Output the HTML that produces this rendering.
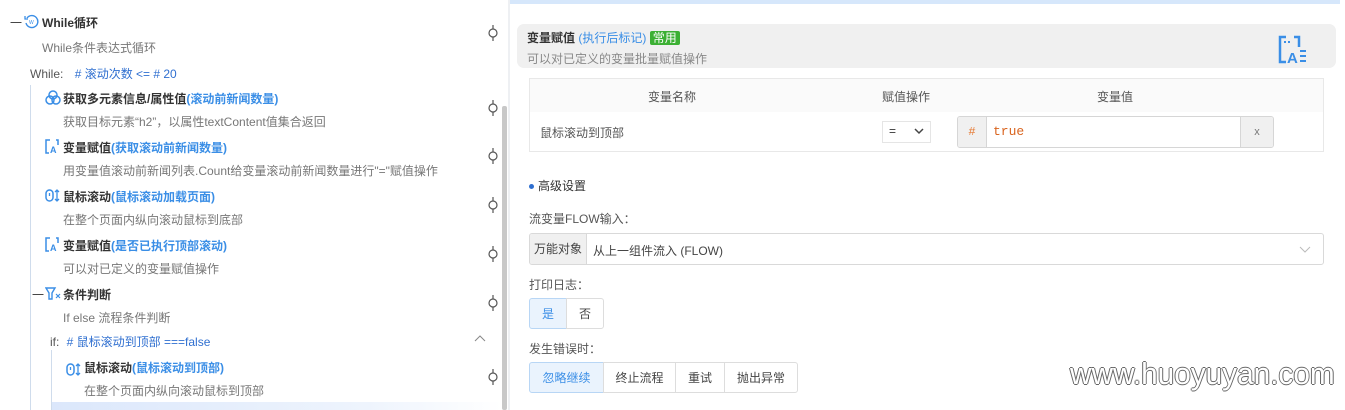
<!DOCTYPE html>
<html><head><meta charset="utf-8"><style>
*{box-sizing:border-box;margin:0;padding:0}
body{width:1345px;height:410px;overflow:hidden;background:#fff;font-family:"Liberation Sans","Noto Sans CJK SC",sans-serif;font-size:12px;color:#333;position:relative}
.a{position:absolute;white-space:nowrap}
.t{font-weight:bold;color:#333;font-size:12px}
.b{color:#3a8ee6}
.d{color:#777;font-size:12px}
.lbl{color:#555}
.btn{position:absolute;top:0;height:31px;border:1px solid #ddd;display:flex;align-items:center;justify-content:center;color:#444;background:#fff}
.on{background:#eaf3fd;color:#3a8ee6;border-color:#b8d6f5}
</style></head><body>
<div class="a" style="left:10px;top:14px;color:#444">一</div>
<svg class="a" style="left:24px;top:14px" width="15" height="15" viewBox="0 0 15 15"><path d="M3 4a6 6 0 1 1-1 5" fill="none" stroke="#3a8ee6" stroke-width="1.4"/><path d="M1 2v3h3" fill="none" stroke="#3a8ee6" stroke-width="1.3"/><text x="5" y="10" font-size="5" fill="#3a8ee6">W</text></svg>
<div class="a t" style="left:42px;top:14px">While循环</div>
<div class="a d" style="left:42px;top:39px">While条件表达式循环</div>
<div class="a" style="left:30px;top:65px;color:#555">While: <span style="color:#2f6fd0;margin-left:8px"># 滚动次数 &lt;= # 20</span></div>
<div class="a" style="left:30px;top:85px;width:1px;height:325px;background:#cfdcec"></div>

<svg class="a" style="left:45px;top:90px" width="16" height="15" viewBox="0 0 16 15"><circle cx="8" cy="5" r="4" fill="none" stroke="#3a8ee6" stroke-width="1.5"/><circle cx="5" cy="10" r="4" fill="none" stroke="#3a8ee6" stroke-width="1.5"/><circle cx="11" cy="10" r="4" fill="none" stroke="#3a8ee6" stroke-width="1.5"/></svg>
<div class="a t" style="left:63px;top:90px">获取多元素信息/属性值<span class="b">(滚动前新闻数量)</span></div>
<div class="a d" style="left:63px;top:113px">获取目标元素“h2”，以属性textContent值集合返回</div>

<svg class="a" style="left:45px;top:139px" width="16" height="15" viewBox="0 0 16 15"><path d="M5 1H1v13h3M11 1h2v5" fill="none" stroke="#3a8ee6" stroke-width="1.5"/><text x="5" y="14" font-size="9" fill="#3a8ee6" font-weight="bold">A</text></svg>
<div class="a t" style="left:63px;top:139px">变量赋值<span class="b">(获取滚动前新闻数量)</span></div>
<div class="a d" style="left:63px;top:162px">用变量值滚动前新闻列表.Count给变量滚动前新闻数量进行"="赋值操作</div>

<svg class="a" style="left:45px;top:188px" width="16" height="15" viewBox="0 0 16 15"><rect x="1" y="2" width="7" height="11" rx="3.5" fill="none" stroke="#3a8ee6" stroke-width="1.5"/><path d="M4.5 5v3M12 2v11M10 4l2-2 2 2M10 11l2 2 2-2" fill="none" stroke="#3a8ee6" stroke-width="1.3"/></svg>
<div class="a t" style="left:63px;top:188px">鼠标滚动<span class="b">(鼠标滚动加载页面)</span></div>
<div class="a d" style="left:63px;top:211px">在整个页面内纵向滚动鼠标到底部</div>

<svg class="a" style="left:45px;top:237px" width="16" height="15" viewBox="0 0 16 15"><path d="M5 1H1v13h3M11 1h2v5" fill="none" stroke="#3a8ee6" stroke-width="1.5"/><text x="5" y="14" font-size="9" fill="#3a8ee6" font-weight="bold">A</text></svg>
<div class="a t" style="left:63px;top:237px">变量赋值<span class="b">(是否已执行顶部滚动)</span></div>
<div class="a d" style="left:63px;top:260px">可以对已定义的变量赋值操作</div>

<div class="a" style="left:32px;top:286px;color:#444">一</div>
<svg class="a" style="left:45px;top:286px" width="16" height="15" viewBox="0 0 16 15"><path d="M1 2h9L7 7v6H4V7z" fill="none" stroke="#3a8ee6" stroke-width="1.4"/><path d="M11 8l4 4M15 8l-4 4" stroke="#3a8ee6" stroke-width="1.2"/></svg>
<div class="a t" style="left:63px;top:286px">条件判断</div>
<div class="a d" style="left:63px;top:309px">If else 流程条件判断</div>
<div class="a" style="left:50px;top:333px;color:#555">if: <span style="color:#2f6fd0;margin-left:4px"># 鼠标滚动到顶部 ===false</span></div>
<svg class="a" style="left:474px;top:334px" width="12" height="8"><path d="M1 7l5-5 5 5" fill="none" stroke="#888" stroke-width="1"/></svg>
<div class="a" style="left:51px;top:350px;width:1px;height:60px;background:#cfdcec"></div>
<svg class="a" style="left:66px;top:362px" width="16" height="15" viewBox="0 0 16 15"><rect x="1" y="2" width="7" height="11" rx="3.5" fill="none" stroke="#3a8ee6" stroke-width="1.5"/><path d="M4.5 5v3M12 2v11M10 4l2-2 2 2M10 11l2 2 2-2" fill="none" stroke="#3a8ee6" stroke-width="1.3"/></svg>
<div class="a t" style="left:84px;top:359px">鼠标滚动<span class="b">(鼠标滚动到顶部)</span></div>
<div class="a d" style="left:84px;top:382px">在整个页面内纵向滚动鼠标到顶部</div>
<div class="a" style="left:52px;top:402px;width:450px;height:8px;background:linear-gradient(90deg,#dbe7fb,#eef4fd 70%,#fff)"></div>

<svg style="position:absolute;left:0;top:0" width="510" height="410">
<g fill="#fff" stroke="#555" stroke-width="1.2">
<path d="M493 25v4M493 37v4"/><circle cx="493" cy="33" r="4"/>
<path d="M493 100v4M493 112v4"/><circle cx="493" cy="108" r="4"/>
<path d="M493 148v4M493 160v4"/><circle cx="493" cy="156" r="4"/>
<path d="M493 197v4M493 209v4"/><circle cx="493" cy="205" r="4"/>
<path d="M493 246v4M493 258v4"/><circle cx="493" cy="254" r="4"/>
<path d="M493 295v4M493 307v4"/><circle cx="493" cy="303" r="4"/>
<path d="M493 369v4M493 381v4"/><circle cx="493" cy="377" r="4"/>
</g>
<rect x="502" y="106" width="5" height="304" rx="2" fill="#c8c8c8"/>
<rect x="508" y="0" width="2" height="410" fill="#eef0f3"/>
</svg>

<div class="a" style="left:510px;top:0;width:830px;height:4px;background:#d6e7fb"></div>
<div class="a" style="left:517px;top:24px;width:819px;height:44px;background:#f0f0f0;border-radius:7px"></div>
<div class="a" style="left:527px;top:29px;font-weight:bold">变量赋值 <span class="b" style="font-weight:normal">(执行后标记)</span> <span style="background:#3cb034;color:#fff;padding:0 3px;border-radius:2px;font-weight:normal">常用</span></div>
<div class="a d" style="left:527px;top:50px;color:#888">可以对已定义的变量批量赋值操作</div>
<svg class="a" style="left:1277px;top:35px" width="32" height="30" viewBox="0 0 32 30"><path d="M9 2H3v25h6M17 2h5v10" fill="none" stroke="#3a8ee6" stroke-width="2.5"/><rect x="7" y="6" width="2" height="2" fill="#3a8ee6"/><rect x="11" y="6" width="2" height="2" fill="#3a8ee6"/><text x="10" y="28" font-size="15" fill="#3a8ee6" font-weight="bold">A</text><path d="M23 16h6M23 21h6M23 26h6" stroke="#3a8ee6" stroke-width="2"/></svg>

<div class="a" style="left:529px;top:78px;width:795px;height:74px;border:1px solid #e8e8e8"></div>
<div class="a" style="left:530px;top:79px;width:793px;height:33px;background:#fafafa"></div>
<div class="a lbl" style="left:648px;top:88px">变量名称</div>
<div class="a lbl" style="left:882px;top:88px">赋值操作</div>
<div class="a lbl" style="left:1097px;top:88px">变量值</div>
<div class="a lbl" style="left:540px;top:124px">鼠标滚动到顶部</div>
<div class="a" style="left:882px;top:121px;width:49px;height:22px;border:1px solid #e5e5e5"></div>
<div class="a" style="left:889px;top:124px;color:#333">=</div>
<svg class="a" style="left:914px;top:128px" width="10" height="7"><path d="M1 1l4 4 4-4" fill="none" stroke="#444" stroke-width="1.5"/></svg>
<div class="a" style="left:957px;top:116px;width:317px;height:32px;border:1px solid #d6d6d6;border-radius:3px;background:#fff;overflow:hidden">
<div class="a" style="left:0;top:0;width:29px;height:30px;background:#f0f0f0;border-right:1px solid #d6d6d6;color:#e6772f;text-align:center;line-height:30px;font-family:'Liberation Mono',monospace">#</div>
<div class="a" style="left:35px;top:7px;color:#d9641f;font-family:'Liberation Mono',monospace;font-size:13px">true</div>
<div class="a" style="right:0;top:0;width:33px;height:30px;background:#f0f0f0;border-left:1px solid #d6d6d6;color:#777;text-align:center;line-height:30px;font-size:11px">x</div>
</div>

<div class="a" style="left:529px;top:177px;font-size:12px;color:#333"><span style="display:inline-block;width:5px;height:5px;border-radius:3px;background:#2f6fd0;vertical-align:middle;margin-right:4px"></span>高级设置</div>
<div class="a lbl" style="left:529px;top:210px">流变量FLOW输入：</div>
<div class="a" style="left:529px;top:233px;width:795px;height:32px;border:1px solid #d9d9d9;border-radius:3px;overflow:hidden">
<div class="a" style="left:0;top:0;width:57px;height:30px;background:#f0f0f0;border-right:1px solid #d9d9d9;line-height:30px;text-align:center;color:#444">万能对象</div>
<div class="a" style="left:63px;top:8px;color:#444">从上一组件流入 (FLOW)</div>
<svg class="a" style="right:12px;top:12px" width="12" height="7"><path d="M1 1l5 5 5-5" fill="none" stroke="#bbb" stroke-width="1"/></svg>
</div>
<div class="a lbl" style="left:529px;top:276px">打印日志：</div>
<div class="a" style="left:529px;top:298px;width:75px;height:31px">
<div class="btn on" style="left:0;width:38px;border-radius:3px 0 0 3px">是</div>
<div class="btn" style="left:37px;width:38px;border-radius:0 3px 3px 0">否</div>
</div>
<div class="a lbl" style="left:529px;top:340px">发生错误时：</div>
<div class="a" style="left:529px;top:362px;width:270px;height:31px">
<div class="btn on" style="left:0;width:75px;border-radius:3px 0 0 3px">忽略继续</div>
<div class="btn" style="left:74px;width:73px">终止流程</div>
<div class="btn" style="left:146px;width:50px">重试</div>
<div class="btn" style="left:195px;width:74px;border-radius:0 3px 3px 0">抛出异常</div>
</div>
<div class="a" style="left:1070px;top:356px;font-size:31px;color:#fff;transform:scaleX(0.96);transform-origin:0 0;text-shadow:-1px 0 #666,1px 0 #666,0 -1px #666,0 1px #666">www.huoyuyan.com</div>
</body></html>
